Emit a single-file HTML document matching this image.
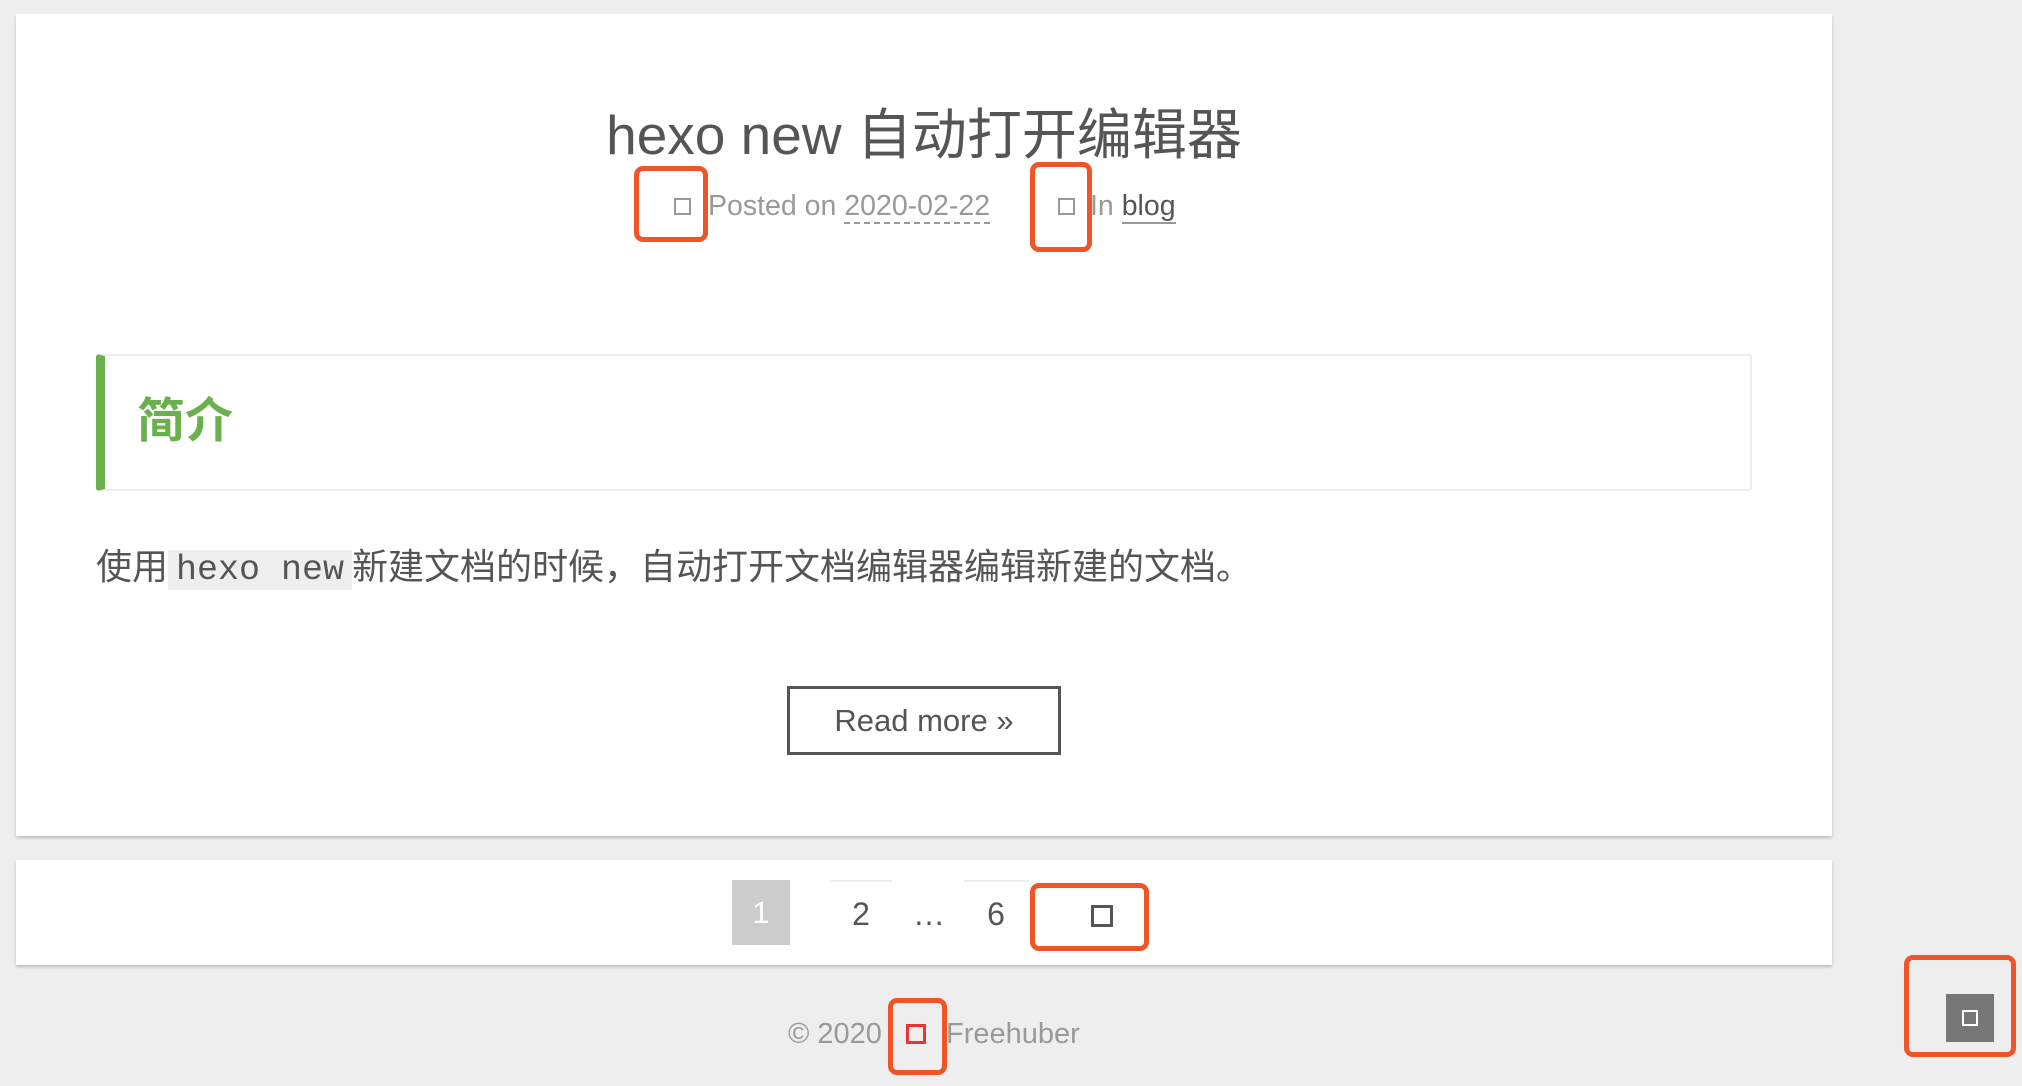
<!DOCTYPE html>
<html><head><meta charset="utf-8"><style>
body{margin:0;width:2022px;height:1086px;background:#eee;position:relative;overflow:hidden;font-family:"Liberation Sans","Noto Sans CJK SC",sans-serif;}
.a{position:absolute}
.card{background:#fff;box-shadow:0 2px 3px rgba(0,0,0,.2)}
.red{position:absolute;border:5px solid #f05528;border-radius:9px;box-sizing:border-box}
.sq{position:absolute;box-sizing:border-box;border:2px solid #999}
</style></head><body>
<div class="a card" style="left:16px;top:14px;width:1816px;height:822px"></div>
<div class="a card" style="left:16px;top:860px;width:1816px;height:105px"></div>

<div class="a" style="left:0;width:1848px;top:100px;text-align:center;font-size:55px;color:#555;line-height:70px">hexo new 自动打开编辑器</div>

<div class="sq" style="left:674px;top:198px;width:17px;height:17px"></div>
<div class="a" style="left:708px;top:189px;font-size:28.5px;color:#999;line-height:34px">Posted on <span style="border-bottom:2px dashed #999">2020-02-22</span></div>
<div class="sq" style="left:1058px;top:198px;width:17px;height:17px"></div>
<div class="a" style="left:1090px;top:189px;font-size:28.5px;color:#999;line-height:34px">In <span style="color:#555;border-bottom:2px solid #999">blog</span></div>
<div class="red" style="left:634px;top:166px;width:74px;height:76px"></div>
<div class="red" style="left:1030px;top:162px;width:62px;height:90px"></div>

<div class="a" style="left:96px;top:354px;width:1656px;height:137px;border:2px solid #eee;border-left:9px solid #6ab04c;box-sizing:border-box;border-radius:3px"></div>
<div class="a" style="left:137px;top:394px;font-size:48px;font-weight:bold;color:#6ab04c;line-height:56px">简介</div>

<div class="a" style="left:96px;top:542px;font-size:36px;color:#555;line-height:50px;white-space:nowrap">使用<span style="background:#eee;font-family:'Liberation Mono',monospace;font-size:35px;padding:0 8px">hexo new</span>新建文档的时候，自动打开文档编辑器编辑新建的文档。</div>

<div class="a" style="left:787px;top:686px;width:274px;height:69px;border:3px solid #555;box-sizing:border-box;text-align:center;font-size:31px;line-height:63px;color:#555">Read more »</div>

<div class="a" style="left:732px;top:880px;width:58px;height:65px;background:#ccc;color:#fff;font-size:31px;text-align:center;line-height:65px">1</div>
<div class="a" style="left:830px;top:880px;width:62px;height:2px;background:#eee"></div>
<div class="a" style="left:840px;top:882px;width:42px;font-size:32px;color:#555;text-align:center;line-height:65px">2</div>
<div class="a" style="left:908px;top:882px;width:42px;font-size:32px;color:#555;text-align:center;line-height:65px">…</div>
<div class="a" style="left:964px;top:880px;width:64px;height:2px;background:#eee"></div>
<div class="a" style="left:975px;top:882px;width:42px;font-size:32px;color:#555;text-align:center;line-height:65px">6</div>
<div class="sq" style="left:1091px;top:905px;width:22px;height:22px;border:3px solid #555"></div>
<div class="red" style="left:1030px;top:883px;width:119px;height:68px"></div>

<div class="a" style="left:788px;top:1016px;font-size:29px;color:#999;line-height:36px">© 2020</div>
<div class="sq" style="left:906px;top:1024px;width:20px;height:20px;border:3px solid #e33"></div>
<div class="a" style="left:946px;top:1016px;font-size:29px;color:#999;line-height:36px">Freehuber</div>
<div class="red" style="left:888px;top:998px;width:59px;height:77px"></div>

<div class="a" style="left:1946px;top:994px;width:48px;height:48px;background:#777"></div>
<div class="sq" style="left:1962px;top:1010px;width:16px;height:16px;border:2px solid #fff"></div>
<div class="red" style="left:1904px;top:955px;width:112px;height:102px"></div>
</body></html>
